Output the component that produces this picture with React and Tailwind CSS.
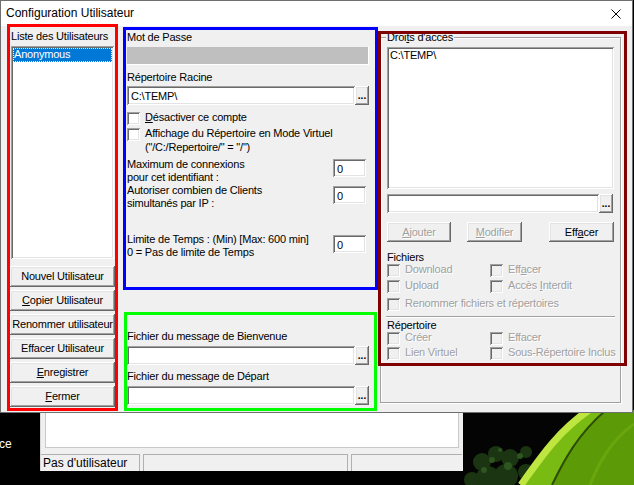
import React from "react";

// Classic 3D edges for Win32-style controls
const RAISED =
  "shadow-[inset_-1px_-1px_0_#696969,inset_1px_1px_0_#ffffff,inset_-2px_-2px_0_#a0a0a0,inset_2px_2px_0_#e3e3e3]";
const SUNKEN =
  "shadow-[inset_1px_1px_0_#a0a0a0,inset_-1px_-1px_0_#ffffff,inset_2px_2px_0_#696969,inset_-2px_-2px_0_#e3e3e3]";

function Button({ className = "", disabled = false, children }) {
  return (
    <div
      className={`flex items-center justify-center bg-[#f0f0f0] ${RAISED} ${
        disabled ? "text-[#a0a0a0] [text-shadow:1px_1px_0_#ffffff]" : "text-black"
      } ${className}`}
    >
      <span>{children}</span>
    </div>
  );
}

function Browse({ className = "" }) {
  return (
    <div className={`w-[14px] flex items-end justify-center bg-[#f0f0f0] ${RAISED} ${className}`}>
      <span className="font-bold text-[10px] leading-[12px] tracking-[0px] mb-[3px]">...</span>
    </div>
  );
}

function Edit({ className = "", children }) {
  return (
    <div className={`bg-white ${SUNKEN} pl-[4px] pt-[4px] ${className}`}>{children}</div>
  );
}

function Box({ disabled = false }) {
  return (
    <span
      className={`block w-[13px] h-[13px] shrink-0 ${SUNKEN} ${
        disabled ? "bg-[#f0f0f0]" : "bg-white"
      }`}
    />
  );
}

function Check({ label, disabled = false, className = "" }) {
  return (
    <div className={`flex items-start ${className}`}>
      <Box disabled={disabled} />
      <span
        className={`ml-[5px] -mt-[1px] whitespace-nowrap ${
          disabled ? "text-[#a0a0a0] [text-shadow:1px_1px_0_#ffffff]" : ""
        }`}
      >
        {label}
      </span>
    </div>
  );
}

function Desktop() {
  return (
    <>
      {/* foliage and leaf in the lower right of the wallpaper */}
      <svg
        className="absolute left-[440px] top-[400px]"
        width="194"
        height="85"
        viewBox="0 0 194 85"
      >
        <rect width="194" height="85" fill="#030403" />
        <g fill="#1b3512">
          <circle cx="42" cy="62" r="9" />
          <circle cx="56" cy="54" r="8" />
          <circle cx="70" cy="58" r="9" />
          <circle cx="86" cy="52" r="6" />
          <circle cx="48" cy="78" r="12" />
          <circle cx="66" cy="76" r="12" />
          <circle cx="32" cy="80" r="8" />
          <circle cx="86" cy="72" r="8" />
        </g>
        <g fill="#2e5620">
          <circle cx="52" cy="60" r="3" />
          <circle cx="68" cy="66" r="4" />
          <circle cx="80" cy="56" r="3" />
          <circle cx="44" cy="70" r="3" />
          <circle cx="60" cy="50" r="2" />
        </g>
        {/* leaf body */}
        <path d="M80 85 C98 60 116 32 148 10 L194 10 L194 85 Z" fill="#5c9a08" />
        <path d="M84 85 C102 60 120 32 152 10 L166 10 C138 34 124 60 112 85 Z" fill="#79bb12" />
        {/* lit edge */}
        <path d="M81 85 C99 60 117 32 149 10" stroke="#bfe640" strokeWidth="7" fill="none" />
        {/* midrib */}
        <path d="M112 85 C124 60 138 34 166 10" stroke="#2c4d05" strokeWidth="2" fill="none" />
        <path d="M150 85 C160 60 172 40 194 24" stroke="#6aa60c" strokeWidth="3" fill="none" />
      </svg>

      {/* label of a desktop icon */}
      <div className="absolute left-[-1px] top-[437px] text-white text-[12px] leading-[14px] tracking-[0px]">
        ce
      </div>

      {/* another application window behind the dialog */}
      <div className="absolute left-[40px] top-[300px] w-[423px] h-[171px] bg-[#f0f0f0] border-l border-[#d8d8d8] flex flex-col">
        <div className="flex-1 mx-[4px] mb-[6px] bg-white border-l border-b border-r border-[#c8c8c8]" />
        <div className="h-[17px] flex gap-[3px] pr-[1px]">
          <div className="w-[99px] border-t border-r border-[#b0b0b0] text-[12px] leading-[14px] tracking-[0px] pl-[2px] pt-[1px]">
            Pas d'utilisateur
          </div>
          <div className="w-[205px] border-t border-l border-r border-[#b0b0b0]" />
          <div className="flex-1 border-t border-l border-[#b0b0b0]" />
        </div>
      </div>
    </>
  );
}

export default function App() {
  return (
    <div className="relative w-[634px] h-[485px] overflow-hidden bg-black font-['Liberation_Sans',Arial,sans-serif] text-[11px] leading-[13px] tracking-[-0.2px] text-black">
      <Desktop />

      {/* Configuration dialog */}
      <div className="absolute left-0 top-0 w-[633px] h-[413px] border border-[#6f6f6f] bg-[#f0f0f0] flex flex-col">
        {/* title bar */}
        <div className="h-[25px] shrink-0 bg-white flex items-center justify-between pl-[5px] pr-[11px]">
          <span className="text-[12px] leading-[15px] tracking-[0px]">Configuration Utilisateur</span>
          <svg width="10" height="10" viewBox="0 0 10 10">
            <path d="M0.5 0.5 L9.5 9.5 M9.5 0.5 L0.5 9.5" stroke="#000" strokeWidth="1" />
          </svg>
        </div>

        {/* client area */}
        <div className="flex-1 flex items-start">
          {/* user list column */}
          <div className="ml-[6px] -mt-[2px] w-[111px] h-[387px] shrink-0 border-[3px] border-[#ff0000] flex flex-col pt-[3px]">
            <div className="pl-[1px] whitespace-nowrap">Liste des Utilisateurs</div>
            <div className={`mt-[3px] mx-[1px] h-[213px] bg-white ${SUNKEN} p-[2px]`}>
              <div className="h-[14px] bg-[#0078d7] text-white pl-[1px] outline outline-1 outline-dotted outline-[#ffffff] -outline-offset-1">
                Anonymous
              </div>
            </div>
            <div className="mt-[7px] flex flex-col gap-[3px]">
              <Button className="h-[21px]">Nouvel Utilisateur</Button>
              <Button className="h-[21px]">
                <u>C</u>opier Utilisateur
              </Button>
              <Button className="h-[21px]">Renommer utilisateur</Button>
              <Button className="h-[21px]">Effacer Utilisateur</Button>
              <Button className="h-[21px]">
                <u>E</u>nregistrer
              </Button>
              <Button className="h-[21px]">
                <u>F</u>ermer
              </Button>
            </div>
          </div>

          {/* account settings column */}
          <div className="ml-[5px] w-[255px] shrink-0 flex flex-col">
            <div className="mt-[1px] h-[263px] border-[3px] border-[#0000ff] flex flex-col pl-[1px]">
              <div className="mt-[1px]">Mot de Passe</div>
              <div className="mt-[3px] w-[242px] h-[18px] bg-[#bfbfbf] border-r border-b border-white" />
              <div className="mt-[6px]">Répertoire Racine</div>
              <div className="mt-[2px] flex h-[19px]">
                <Edit className="w-[228px]">C:\TEMP\</Edit>
                <Browse />
              </div>
              <Check className="mt-[6px] h-[16px] pt-[1px]" label={<><u>D</u>ésactiver ce compte</>} />
              <Check className="h-[14px] pt-[1px]" label="Affichage du Répertoire en Mode Virtuel" />
              <div className="pl-[18px]">("/C:/Repertoire/" = "/")</div>

              <div className="mt-[4px] flex justify-between pr-[9px]">
                <div>
                  Maximum de connexions
                  <br />
                  pour cet identifiant :
                </div>
                <Edit className="mt-[1px] w-[33px] h-[18px] pl-[3px] pt-[3px]">0</Edit>
              </div>
              <div className="flex justify-between pr-[9px]">
                <div>
                  Autoriser combien de Clients
                  <br />
                  simultanés par IP :
                </div>
                <Edit className="mt-[2px] w-[33px] h-[18px] pl-[3px] pt-[3px]">0</Edit>
              </div>
              <div className="mt-[23px] flex justify-between pr-[9px]">
                <div>
                  Limite de Temps : (Min) [Max: 600 min]
                  <br />0 = Pas de limite de Temps
                </div>
                <Edit className="mt-[2px] w-[33px] h-[18px] pl-[3px] pt-[3px]">0</Edit>
              </div>
            </div>

            <div className="ml-[1px] mt-[22px] w-[253px] h-[99px] border-[3px] border-[#00ff00] flex flex-col">
              <div className="mt-[15px]">Fichier du message de Bienvenue</div>
              <div className="mt-[3px] flex h-[19px]">
                <Edit className="w-[228px]" />
                <Browse />
              </div>
              <div className="mt-[5px]">Fichier du message de Départ</div>
              <div className="mt-[3px] flex h-[19px]">
                <Edit className="w-[228px]" />
                <Browse />
              </div>
            </div>
          </div>

          {/* access rights column */}
          <div className="relative w-[254px] shrink-0 self-stretch">
            <div className="relative ml-[2px] mt-[11px] w-[241px] h-[366px] border border-[#a0a0a0] shadow-[1px_1px_0_#ffffff,inset_1px_1px_0_#ffffff] pl-[6px] flex flex-col">
              <div className="absolute left-[5px] -top-[7px] px-[1px] bg-[#f0f0f0]">
                Droi<u>t</u>s d'accès
              </div>
              <div className={`mt-[9px] w-[227px] h-[142px] bg-white ${SUNKEN} pl-[3px] pt-[2px]`}>
                C:\TEMP\
              </div>
              <div className="mt-[5px] flex h-[19px]">
                <Edit className="w-[212px]" />
                <Browse />
              </div>
              <div className="mt-[9px] flex h-[20px]">
                <Button disabled className="w-[64px]">
                  <u>A</u>jouter
                </Button>
                <Button disabled className="ml-[16px] w-[55px]">
                  <u>M</u>odifier
                </Button>
                <Button className="ml-[27px] w-[65px]">
                  Eff<u>a</u>cer
                </Button>
              </div>

              <div className="mt-[9px]">Fichiers</div>
              <div className="grid grid-cols-[103px_1fr]">
                <Check disabled className="h-[16px]" label="Download" />
                <Check disabled className="h-[16px]" label={<>Eff<u>a</u>cer</>} />
                <Check disabled className="h-[18px]" label="Upload" />
                <Check disabled className="h-[18px]" label={<>Accès <u>I</u>nterdit</>} />
                <Check disabled className="col-span-2 h-[13px]" label="Renommer fichiers et répertoires" />
              </div>
              <div className="mt-[5px] -ml-[1px] w-[229px] h-[2px] border-t border-b border-t-[#a0a0a0] border-b-white" />
              <div className="mt-[1px]">Répertoire</div>
              <div className="grid grid-cols-[103px_1fr]">
                <Check disabled className="h-[15px]" label="Créer" />
                <Check disabled className="h-[15px]" label="Effacer" />
                <Check disabled className="h-[15px]" label="Lien Virtuel" />
                <Check disabled className="h-[15px]" label="Sous-Répertoire Inclus" />
              </div>
            </div>

            {/* highlight frame drawn over the access rights group */}
            <div className="absolute left-0 top-[5px] w-[249px] h-[335px] border-[3px] border-[#800000] pointer-events-none" />
          </div>
        </div>
      </div>
    </div>
  );
}
